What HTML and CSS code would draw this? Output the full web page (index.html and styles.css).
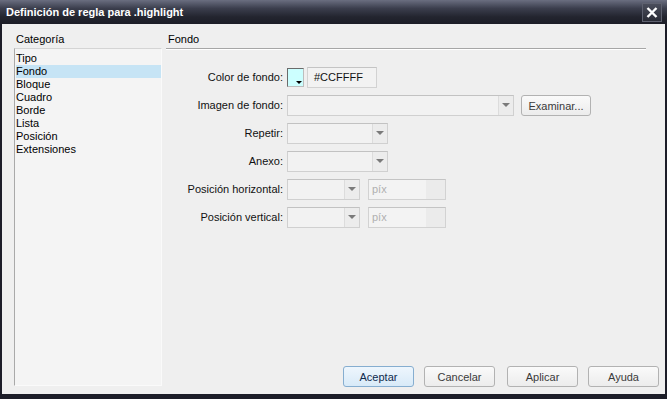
FILE: index.html
```html
<!DOCTYPE html>
<html lang="es">
<head>
  <meta charset="UTF-8" />
  <title>Definición de regla para .highlight</title>
  <link rel="stylesheet" href="styles.css">
</head>
<body>
  <div class="dialog">
    <div class="titlebar">
      <span class="title">Definición de regla para .highlight</span>
      <span class="close">
        <svg width="12" height="11" viewBox="0 0 12 11"><path d="M1.5 1 L10.5 10 M10.5 1 L1.5 10" stroke="#fff" stroke-width="2.4"/></svg>
      </span>
    </div>

    <div class="client">
      <div class="sidebar">
        <div class="sidebar-title">Categoría</div>
        <ul class="catlist">
          <li>Tipo</li>
          <li class="selected">Fondo</li>
          <li>Bloque</li>
          <li>Cuadro</li>
          <li>Borde</li>
          <li>Lista</li>
          <li>Posición</li>
          <li>Extensiones</li>
        </ul>
      </div>

      <div class="main">
        <div class="panel-title">Fondo</div>

        <div class="form">
          <label>Color de fondo:</label>
          <div class="field">
            <span class="swatch"><i></i></span>
            <span class="input color-input">#CCFFFF</span>
          </div>

          <label>Imagen de fondo:</label>
          <div class="field">
            <span class="select wide"><b></b></span>
            <button class="btn browse">Examinar...</button>
          </div>

          <label>Repetir:</label>
          <div class="field"><span class="select mid"><b></b></span></div>

          <label>Anexo:</label>
          <div class="field"><span class="select mid"><b></b></span></div>

          <label>Posición horizontal:</label>
          <div class="field">
            <span class="select small"><b></b></span>
            <span class="input unit">píx</span>
          </div>

          <label>Posición vertical:</label>
          <div class="field">
            <span class="select small"><b></b></span>
            <span class="input unit">píx</span>
          </div>
        </div>

        <div class="actions">
          <button class="btn default">Aceptar</button>
          <button class="btn">Cancelar</button>
          <button class="btn apply">Aplicar</button>
          <button class="btn">Ayuda</button>
        </div>
      </div>
    </div>
  </div>
</body>
</html>
```

FILE: styles.css
```css
body {
  margin: 0;
  font-family: 'Liberation Sans', Arial, sans-serif;
  font-size: 11px;
  color: #000;
}

.dialog {
  width: 667px;
  height: 399px;
  background: #1c1d28;
  display: flex;
  flex-direction: column;
}

.titlebar {
  height: 24px;
  flex: none;
  display: flex;
  align-items: center;
  justify-content: space-between;
  padding: 0 5px 0 6px;
  background: linear-gradient(#6a6e80, #3b3e4d 35%, #23252f 70%, #1c1d27);
}

.title {
  color: #fff;
  font-weight: bold;
  font-size: 11px;
}

.close {
  width: 18px;
  height: 17px;
  display: flex;
  align-items: center;
  justify-content: center;
  border: 1px solid #5e616f;
  background: linear-gradient(#4a4d5b, #2a2c36);
}

.client {
  flex: 1;
  margin: 0 2px 5px 2px;
  background: #efefef;
  display: flex;
  padding: 9px 6px 7px 12px;
  gap: 4px;
}

.sidebar {
  width: 148px;
  display: flex;
  flex-direction: column;
}

.sidebar-title,
.panel-title {
  height: 15px;
  line-height: 13px;
  padding-left: 2px;
}

.catlist {
  flex: 1;
  list-style: none;
  margin: 0 0 1px 0;
  padding: 3px 0 0 1px;
  background: #f4f4f4;
  border-left: 1px solid #a9a9a9;
  border-top: 1px solid #d4d4d4;
  border-right: 1px solid #fafafa;
  border-bottom: 1px solid #fafafa;
}

.catlist li {
  height: 13px;
  line-height: 13px;
}

.catlist li.selected {
  background: #c6e4f5;
}

.main {
  flex: 1;
  display: flex;
  flex-direction: column;
}

.panel-title {
  margin-right: 13px;
  border-bottom: 1px solid #a6a6a6;
  box-shadow: 0 1px 0 #fff;
}

.form {
  display: grid;
  grid-template-columns: 117px 1fr;
  column-gap: 4px;
  row-gap: 7px;
  padding-top: 18px;
}

.form label {
  height: 21px;
  line-height: 21px;
  text-align: right;
  color: #111;
}

.field {
  display: flex;
  align-items: center;
  height: 21px;
}

.swatch {
  width: 15px;
  height: 17px;
  border: 1px solid #6b6b6b;
  border-right-color: #bdbdbd;
  border-bottom-color: #bdbdbd;
  background: #ccffff;
  position: relative;
  margin-right: 3px;
}

.swatch i {
  position: absolute;
  right: 1px;
  bottom: 2px;
  border-left: 3px solid transparent;
  border-right: 3px solid transparent;
  border-top: 3px solid #000;
}

.input {
  box-sizing: border-box;
  height: 21px;
  line-height: 19px;
  padding-left: 6px;
  background: #f2f2f2;
  border: 1px solid #d2d2d2;
  border-top-color: #c4c4c4;
}

.color-input {
  width: 70px;
  color: #111;
}

.unit {
  width: 78px;
  margin-left: 8px;
  color: #b0b0b0;
  padding-left: 3px;
  background: linear-gradient(to right, #f3f3f3 75%, #ebebeb 75%);
}

.select {
  box-sizing: border-box;
  height: 21px;
  display: flex;
  justify-content: flex-end;
  background: #f2f2f2;
  border: 1px solid #d0d0d0;
  border-top-color: #c2c2c2;
}

.select b {
  width: 14px;
  border-left: 1px solid #dcdcdc;
  background: #ececec;
  position: relative;
}

.select b::after {
  content: "";
  position: absolute;
  left: 3px;
  top: 7px;
  border-left: 4px solid transparent;
  border-right: 4px solid transparent;
  border-top: 4px solid #7a7a7a;
}

.select.wide { width: 227px; }
.select.mid { width: 101px; }
.select.small { width: 73px; }

.btn {
  box-sizing: border-box;
  width: 71px;
  height: 21px;
  padding: 0;
  font-family: inherit;
  font-size: 11px;
  color: #3a3a3a;
  border: 1px solid #b2b2b2;
  border-radius: 3px;
  background: linear-gradient(#fafafa, #ececec);
}

.browse {
  width: 70px;
  margin-left: 7px;
}

.actions {
  margin-top: auto;
  display: flex;
  justify-content: flex-end;
  gap: 10px;
}

.actions .apply {
  margin-left: 2px;
}

.btn.default {
  color: #0f2a4d;
  border-color: #86aed0;
  background: linear-gradient(#eef6fd, #d8eaf8);
}
```
